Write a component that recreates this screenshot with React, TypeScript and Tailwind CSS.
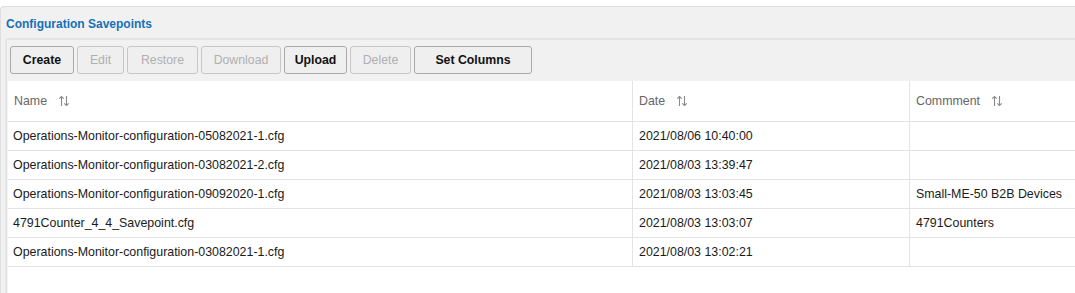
import { ReactNode } from "react";

type Row = { name: string; date: string; comment: string };

const rows: Row[] = [
  { name: "Operations-Monitor-configuration-05082021-1.cfg", date: "2021/08/06 10:40:00", comment: "" },
  { name: "Operations-Monitor-configuration-03082021-2.cfg", date: "2021/08/03 13:39:47", comment: "" },
  { name: "Operations-Monitor-configuration-09092020-1.cfg", date: "2021/08/03 13:03:45", comment: "Small-ME-50 B2B Devices" },
  { name: "4791Counter_4_4_Savepoint.cfg", date: "2021/08/03 13:03:07", comment: "4791Counters" },
  { name: "Operations-Monitor-configuration-03082021-1.cfg", date: "2021/08/03 13:02:21", comment: "" },
];

const buttons = [
  { label: "Create", w: "w-[64px]", on: true },
  { label: "Edit", w: "w-[47px]", on: false },
  { label: "Restore", w: "w-[71px]", on: false },
  { label: "Download", w: "w-[80px]", on: false },
  { label: "Upload", w: "w-[63px]", on: true },
  { label: "Delete", w: "w-[61px]", on: false },
  { label: "Set Columns", w: "w-[118px]", on: true },
];

function SortIcon() {
  return (
    <svg width="12" height="12" viewBox="0 0 12 12" className="ml-[11px]" fill="none" stroke="#8a8a8a" strokeWidth="1.1">
      <path d="M3.5 11V1.5M1.3 3.7L3.5 1.5L5.7 3.7" />
      <path d="M8.5 1V10.5M6.3 8.3L8.5 10.5L10.7 8.3" />
    </svg>
  );
}

function Cell({ children, className = "" }: { children?: ReactNode; className?: string }) {
  return <div className={`flex items-center px-[6px] ${className}`}>{children}</div>;
}

export default function App() {
  return (
    <div className="h-[293px] w-[1075px] overflow-hidden bg-white pt-[6px] font-['Liberation_Sans',Arial,sans-serif] text-[12.4px]">
      <div className="h-full rounded-tl-[4px] border-l border-t border-[#dedede] bg-[#f1f1f1]">
        <div className="h-[31px] pl-[5px] pt-[10px] text-[12px] font-bold leading-[14px] text-[#1570b8]">
          Configuration Savepoints
        </div>
        <div className="ml-[4px] h-full rounded-tl-[3px] border-l-2 border-t-2 border-[#e4e4e4] bg-[#f1f1f1] pl-[1px]">
          <div className="flex h-[41px] items-start gap-[3px] pl-[2px] pt-[6px]">
            {buttons.map((b) => (
              <button
                key={b.label}
                type="button"
                className={`${b.w} h-[28px] rounded-[3px] border bg-[#efefef] text-[12.3px] ${
                  b.on ? "border-[#a9a9a9] font-bold text-[#111]" : "border-[#c6c6c6] text-[#b0b0b0]"
                }`}
              >
                {b.label}
              </button>
            ))}
          </div>
          <div className="h-full bg-white">
            <div className="grid h-[41px] grid-cols-[625px_277px_1fr] border-b border-[#e3e3e3] text-[#666]">
              <Cell className="border-r border-[#e3e3e3] pl-[6px]">
                Name
                <SortIcon />
              </Cell>
              <Cell className="border-r border-[#e3e3e3]">
                Date
                <SortIcon />
              </Cell>
              <Cell>
                Commment
                <SortIcon />
              </Cell>
            </div>
            {rows.map((r) => (
              <div key={r.name + r.date} className="grid h-[29px] grid-cols-[625px_277px_1fr] border-b border-[#e3e3e3] text-[#1a1a1a]">
                <Cell className="border-r border-[#e3e3e3] pl-[5px]">{r.name}</Cell>
                <Cell className="border-r border-[#e3e3e3]">{r.date}</Cell>
                <Cell>{r.comment}</Cell>
              </div>
            ))}
          </div>
        </div>
      </div>
    </div>
  );
}
